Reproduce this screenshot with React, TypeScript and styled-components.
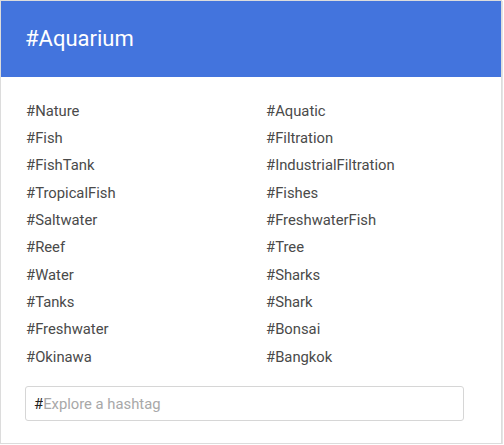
import React from "react";
import styled, { createGlobalStyle } from "styled-components";

const Global = createGlobalStyle`
  html, body { margin: 0; padding: 0; background: #fff; }
  body { font-family: Roboto, "Liberation Sans", Arial, sans-serif; }
`;

const Card = styled.div`
  box-sizing: border-box;
  width: 502px;
  height: 444px;
  border: 1px solid #dcdcdc;
  box-shadow: 1px 1px 0 #e4e4e4;
  background: #fff;
  display: flex;
  flex-direction: column;
`;

const Header = styled.div`
  height: 76px;
  background: #4374dd;
  display: flex;
  align-items: center;
  padding-left: 24px;
  color: #fff;
  font-size: 22px;
  font-weight: 400;
  padding-bottom: 2px;
  box-sizing: border-box;
`;

const Body = styled.div`
  padding: 20px 37px 0 25px;
  display: flex;
  flex-direction: column;
`;

const Grid = styled.div`
  display: grid;
  grid-template-columns: 240px 1fr;
  grid-auto-rows: 27.33px;
`;

const Tag = styled.a`
  display: flex;
  align-items: center;
  font-size: 14.8px;
  color: #4a4a4a;
  text-decoration: none;
  white-space: nowrap;
`;

const SearchBox = styled.label`
  margin-top: 16px;
  margin-left: -1px;
  box-sizing: border-box;
  width: 439px;
  height: 35px;
  border: 1px solid #d6d6d6;
  border-radius: 3px;
  display: flex;
  align-items: center;
  padding-left: 8px;
  font-size: 14.8px;
`;

const Hash = styled.span`
  color: #222;
`;

const Input = styled.input`
  border: none;
  outline: none;
  flex: 1;
  font: inherit;
  font-size: 14.8px;
  padding: 0;
  color: #444;
  &::placeholder { color: #a8a8a8; }
`;

const left = ["Nature", "Fish", "FishTank", "TropicalFish", "Saltwater", "Reef", "Water", "Tanks", "Freshwater", "Okinawa"];
const right = ["Aquatic", "Filtration", "IndustrialFiltration", "Fishes", "FreshwaterFish", "Tree", "Sharks", "Shark", "Bonsai", "Bangkok"];

export default function App() {
  const tags: string[] = [];
  left.forEach((l, i) => { tags.push(l, right[i]); });
  return (
    <>
      <Global />
      <Card>
        <Header>#Aquarium</Header>
        <Body>
          <Grid>
            {tags.map((t) => (
              <Tag key={t}>#{t}</Tag>
            ))}
          </Grid>
          <SearchBox>
            <Hash>#</Hash>
            <Input placeholder="Explore a hashtag" />
          </SearchBox>
        </Body>
      </Card>
    </>
  );
}
